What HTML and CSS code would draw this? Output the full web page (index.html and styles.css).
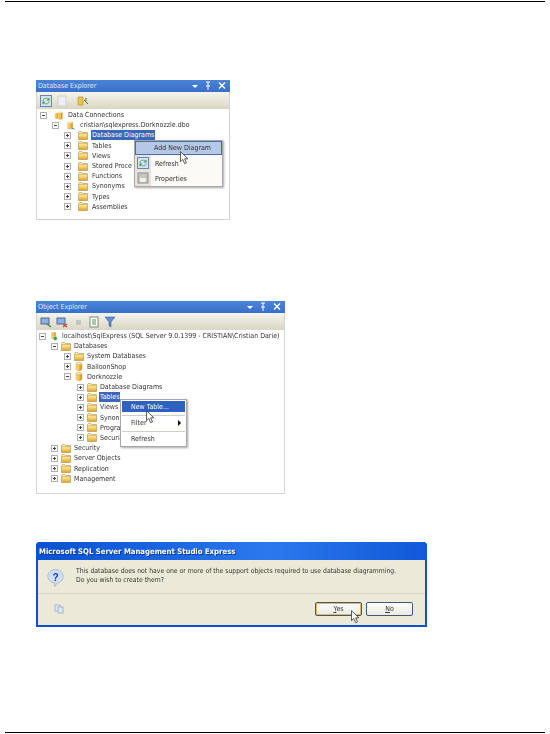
FILE: index.html
```html
<!DOCTYPE html>
<html>

<head>
    <title>SQL Server screenshots</title>
    <link rel="stylesheet" href="styles.css">
</head>

<body>
    <svg class="defs" width="0" height="0">
        <defs>
            <linearGradient id="folderfill" x1="0" y1="0" x2="0" y2="1">
                <stop offset="0" stop-color="#fff3c0"/>
                <stop offset=".5" stop-color="#f8d878"/>
                <stop offset="1" stop-color="#e0a030"/>
            </linearGradient>
            <linearGradient id="dbfill" x1="0" y1="0" x2="1" y2="0">
                <stop offset="0" stop-color="#fbe08a"/>
                <stop offset=".5" stop-color="#f5c040"/>
                <stop offset="1" stop-color="#cf8e20"/>
            </linearGradient>
        </defs>
        <symbol id="folder" viewBox="0 0 10 9">
            <path d="M.5 2V1.200L1.200.5h2.600l.8 1h4.900v7H.5z" fill="url(#folderfill)" stroke="#a8904c" stroke-width=".6"/>
            <path d="M1 2.500h8" stroke="#c09a40" stroke-width=".5"/>
        </symbol>
        <symbol id="plus" viewBox="0 0 7 7">
            <rect x=".5" y=".5" width="6" height="6" fill="#fafafa" stroke="#b0b0b0"/>
            <path d="M2 3.500h3M3.500 2v3" stroke="#444"/>
        </symbol>
        <symbol id="minus" viewBox="0 0 7 7">
            <rect x=".5" y=".5" width="6" height="6" fill="#fafafa" stroke="#b0b0b0"/>
            <path d="M2 3.500h3" stroke="#444"/>
        </symbol>
        <symbol id="db" viewBox="0 0 8 11">
            <path d="M.5 2v7c0 2 7 2 7 0V2z" fill="url(#dbfill)" stroke="#b5862a" stroke-width=".5"/>
            <ellipse cx="4" cy="2" rx="3.500" ry="1.500" fill="#fdeeb0" stroke="#b5862a" stroke-width=".5"/>
        </symbol>
        <symbol id="conn" viewBox="0 0 10 11">
            <path d="M.5 3v6h3V3z" fill="url(#dbfill)" stroke="#b5862a" stroke-width=".4"/>
            <path d="M4 1.500v8.500h5V1.500z" fill="url(#dbfill)" stroke="#b5862a" stroke-width=".4"/>
            <ellipse cx="6.500" cy="1.500" rx="2.500" ry="1" fill="#fdeeb0"/>
        </symbol>
        <symbol id="link" viewBox="0 0 10 11">
            <path d="M1 1.500v8h6v-8z" fill="url(#dbfill)" stroke="#b5862a" stroke-width=".4"/>
            <ellipse cx="4" cy="1.500" rx="3" ry="1.200" fill="#fdeeb0"/>
            <path d="M6 8.500l3 1.500" stroke="#3d7ab0" stroke-width="1.200"/>
        </symbol>
        <symbol id="server" viewBox="0 0 10 11">
            <path d="M2 1l5-.5V8H2z" fill="url(#dbfill)" stroke="#b5862a" stroke-width=".4"/>
            <circle cx="6.500" cy="7.800" r="2.600" fill="#3fa04a" stroke="#fff" stroke-width=".6"/>
        </symbol>
        <symbol id="refresh" viewBox="0 0 12 12">
            <rect x=".5" y=".5" width="11" height="11" fill="#d6e3f4" stroke="#6a86b4"/>
            <path d="M3 6c0-3.500 5-3.500 6-1M9 6.500c0 3-5 3-6 1" stroke="#5aa85a" fill="none"/>
            <path d="M9.500 2.500v3h-3zM2.500 9.500v-3h3z" fill="#3d9a3d"/>
        </symbol>
        <symbol id="cursor" viewBox="0 0 11 15">
            <path d="M.5.500v11l2.600-2.400 2 4.600 2-.9-2-4.400h3.600z" fill="#fff" stroke="#222" stroke-width=".8"/>
        </symbol>
        <symbol id="wincontrols" viewBox="0 0 36 10">
            <path d="M1 4h6L4 7z" fill="#fff"/>
            <path d="M17 1v4M15 1h4M15 5h4M17 5v4" stroke="#fff" fill="none"/>
            <path d="M28 1.500l6 6M34 1.500l-6 6" stroke="#fff" stroke-width="1.400"/>
        </symbol>
    </svg>

    <div class="page">
        <hr class="rule" />

        <div class="panel panel-db">
            <div class="titlebar">
                <span>Database Explorer</span>
                <svg class="controls"><use href="#wincontrols"/></svg>
            </div>
            <div class="toolbar">
                <svg class="tool"><use href="#refresh"/></svg>
                <svg class="tool" viewBox="0 0 12 12"><rect x="2" y="1" width="8" height="10" fill="#efefef" stroke="#cfcfcf"/></svg>
                <i class="tool-sep"></i>
                <svg class="tool" viewBox="0 0 12 12"><path d="M1 2h5v8H1z" fill="#f2c43e" stroke="#a8892f" stroke-width=".6"/><path d="M7 5l4 4M9 3v3" stroke="#3d7a3d"/></svg>
            </div>
            <div class="tree tree-db">
                <div class="row d0"><svg class="exp"><use href="#minus"/></svg><svg class="ico"><use href="#conn"/></svg><span>Data Connections</span></div>
                <div class="row d1"><svg class="exp"><use href="#minus"/></svg><svg class="ico"><use href="#link"/></svg><span>cristian\sqlexpress.Dorknozzle.dbo</span></div>
                <div class="row d2"><svg class="exp"><use href="#plus"/></svg><svg class="ico"><use href="#folder"/></svg><span class="sel">Database Diagrams</span></div>
                <div class="row d2"><svg class="exp"><use href="#plus"/></svg><svg class="ico"><use href="#folder"/></svg><span>Tables</span></div>
                <div class="row d2"><svg class="exp"><use href="#plus"/></svg><svg class="ico"><use href="#folder"/></svg><span>Views</span></div>
                <div class="row d2"><svg class="exp"><use href="#plus"/></svg><svg class="ico"><use href="#folder"/></svg><span>Stored Proce</span></div>
                <div class="row d2"><svg class="exp"><use href="#plus"/></svg><svg class="ico"><use href="#folder"/></svg><span>Functions</span></div>
                <div class="row d2"><svg class="exp"><use href="#plus"/></svg><svg class="ico"><use href="#folder"/></svg><span>Synonyms</span></div>
                <div class="row d2"><svg class="exp"><use href="#plus"/></svg><svg class="ico"><use href="#folder"/></svg><span>Types</span></div>
                <div class="row d2"><svg class="exp"><use href="#plus"/></svg><svg class="ico"><use href="#folder"/></svg><span>Assemblies</span></div>
            </div>

            <div class="menu menu-db">
                <div class="menu-item hot-light"><span>Add New Diagram</span></div>
                <div class="menu-item tall">
                    <svg class="menu-ico"><use href="#refresh"/></svg>
                    <span>Refresh</span>
                </div>
                <div class="menu-item tall">
                    <svg class="menu-ico" viewBox="0 0 12 12"><rect x="1" y="1" width="10" height="10" fill="#c4c4c4" stroke="#909090"/><rect x="3" y="6" width="6" height="4" fill="#f0f0f0"/></svg>
                    <span>Properties</span>
                </div>
            </div>
            <svg class="cursor cursor-db"><use href="#cursor"/></svg>
        </div>

        <div class="panel panel-obj">
            <div class="titlebar">
                <span>Object Explorer</span>
                <svg class="controls"><use href="#wincontrols"/></svg>
            </div>
            <div class="toolbar">
                <svg class="tool" viewBox="0 0 12 12"><rect x="1" y="2" width="8" height="6" fill="#8fb0dc" stroke="#456a9c"/><path d="M7 8l4 3" stroke="#3d9a3d" stroke-width="1.500"/></svg>
                <svg class="tool" viewBox="0 0 12 12"><rect x="1" y="2" width="8" height="6" fill="#8fb0dc" stroke="#456a9c"/><path d="M7 8l4 3M11 8l-4 3" stroke="#d04030" stroke-width="1.200"/></svg>
                <svg class="tool" viewBox="0 0 12 12"><rect x="4" y="4" width="5" height="5" fill="#c4c4c4"/></svg>
                <svg class="tool" viewBox="0 0 12 12"><rect x="2" y="1" width="8" height="10" fill="#fff" stroke="#7a8a7a"/><path d="M4 4h4M4 6h4M4 8h4" stroke="#5a8a5a"/></svg>
                <svg class="tool" viewBox="0 0 12 12"><path d="M1 1h10L7 6v5L5 10V6z" fill="#5f8fd6" stroke="#3a62a0" stroke-width=".6"/></svg>
            </div>
            <div class="tree tree-obj">
                <div class="row d0"><svg class="exp"><use href="#minus"/></svg><svg class="ico"><use href="#server"/></svg><span>localhost\SqlExpress (SQL Server 9.0.1399 - CRISTIAN\Cristian Darie)</span></div>
                <div class="row d1"><svg class="exp"><use href="#minus"/></svg><svg class="ico"><use href="#folder"/></svg><span>Databases</span></div>
                <div class="row d2"><svg class="exp"><use href="#plus"/></svg><svg class="ico"><use href="#folder"/></svg><span>System Databases</span></div>
                <div class="row d2"><svg class="exp"><use href="#plus"/></svg><svg class="ico"><use href="#db"/></svg><span>BalloonShop</span></div>
                <div class="row d2"><svg class="exp"><use href="#minus"/></svg><svg class="ico"><use href="#db"/></svg><span>Dorknozzle</span></div>
                <div class="row d3"><svg class="exp"><use href="#plus"/></svg><svg class="ico"><use href="#folder"/></svg><span>Database Diagrams</span></div>
                <div class="row d3"><svg class="exp"><use href="#plus"/></svg><svg class="ico"><use href="#folder"/></svg><span class="sel">Tables</span></div>
                <div class="row d3"><svg class="exp"><use href="#plus"/></svg><svg class="ico"><use href="#folder"/></svg><span>Views</span></div>
                <div class="row d3"><svg class="exp"><use href="#plus"/></svg><svg class="ico"><use href="#folder"/></svg><span>Synon</span></div>
                <div class="row d3"><svg class="exp"><use href="#plus"/></svg><svg class="ico"><use href="#folder"/></svg><span>Progra</span></div>
                <div class="row d3"><svg class="exp"><use href="#plus"/></svg><svg class="ico"><use href="#folder"/></svg><span>Securi</span></div>
                <div class="row d1"><svg class="exp"><use href="#plus"/></svg><svg class="ico"><use href="#folder"/></svg><span>Security</span></div>
                <div class="row d1"><svg class="exp"><use href="#plus"/></svg><svg class="ico"><use href="#folder"/></svg><span>Server Objects</span></div>
                <div class="row d1"><svg class="exp"><use href="#plus"/></svg><svg class="ico"><use href="#folder"/></svg><span>Replication</span></div>
                <div class="row d1"><svg class="exp"><use href="#plus"/></svg><svg class="ico"><use href="#folder"/></svg><span>Management</span></div>
            </div>

            <div class="menu menu-obj">
                <div class="menu-item hot-blue"><span>New Table...</span></div>
                <i class="menu-sep"></i>
                <div class="menu-item"><span>Filter</span><b class="arrow"></b></div>
                <i class="menu-sep"></i>
                <div class="menu-item"><span>Refresh</span></div>
            </div>
            <svg class="cursor cursor-obj"><use href="#cursor"/></svg>
        </div>

        <div class="dialog">
            <div class="dialog-title">Microsoft SQL Server Management Studio Express</div>
            <div class="dialog-body">
                <svg class="question" viewBox="0 0 20 22">
                    <path d="M10 1c5 0 9 3.500 9 8s-4 8-7 8l-3 4v-4C4 16 1 13 1 9s4-8 9-8z" fill="#cfe0f6" stroke="#8aa6cc" stroke-width=".7"/>
                    <text x="10" y="14" class="question-mark">?</text>
                </svg>
                <p>This database does not have one or more of the support objects required to use database diagramming.<br />Do you wish to create them?</p>
            </div>
            <div class="dialog-foot">
                <svg class="copy" viewBox="0 0 10 10"><rect x="1" y="1" width="5" height="6" fill="#dfe7f3" stroke="#8ea3c4" stroke-width=".7"/><rect x="4" y="3" width="5" height="6" fill="#dfe7f3" stroke="#8ea3c4" stroke-width=".7"/></svg>
                <button type="button" class="btn btn-focus"><u>Y</u>es</button>
                <button type="button" class="btn"><u>N</u>o</button>
            </div>
            <svg class="cursor cursor-dlg"><use href="#cursor"/></svg>
        </div>

        <hr class="rule rule-bottom" />
    </div>
</body>

</html>
```

FILE: styles.css
```css
body {
  margin: 0;
  background: #fff;
  font-family: "DejaVu Sans Condensed", "DejaVu Sans", sans-serif;
  font-stretch: condensed;
  font-size: 7px;
  color: #333;
}

.defs {
  position: absolute;
}

.page {
  display: flex;
  flex-direction: column;
  height: 734px;
  box-sizing: border-box;
  padding-top: 1px;
}

.rule {
  border: none;
  height: 1px;
  background: #000;
  margin: 0 5px;
}

.rule-bottom {
  margin-top: auto;
  margin-bottom: 1px;
}

/* tool windows */
.panel {
  position: relative;
  margin-left: 36px;
  border: 1px solid #d4d4d4;
  border-top: none;
  box-sizing: border-box;
  filter: blur(.35px);
}

.panel-db {
  width: 194px;
  height: 140px;
  margin-top: 78px;
}

.panel-obj {
  width: 249px;
  height: 193px;
  margin-top: 81px;
}

.titlebar {
  display: flex;
  align-items: center;
  justify-content: space-between;
  height: 12px;
  padding: 0 3px 0 2px;
  margin: 0 -1px;
  background: linear-gradient(#4a84d8, #3a70c8);
  color: #dfe9f8;
  font-size: 7px;
}

.controls {
  width: 36px;
  height: 10px;
}

.toolbar {
  display: flex;
  align-items: center;
  gap: 4px;
  height: 17px;
  padding-left: 3px;
  background: linear-gradient(#f6f5ee, #d9d6c3);
}

.tool {
  width: 12px;
  height: 12px;
}

.tool-sep {
  width: 1px;
}

.tree {
  padding-top: 1px;
}

.row {
  display: flex;
  align-items: center;
  height: 10.2px;
  line-height: 10px;
  white-space: nowrap;
}

.exp {
  flex: none;
  width: 7px;
  height: 7px;
}

.ico {
  flex: none;
  width: 10px;
  height: 9px;
}

.tree-db .exp {
  margin-right: 7px;
}

.tree-db .ico {
  margin-right: 4px;
}

.tree-db .d0 { padding-left: 3px; }
.tree-db .d1 { padding-left: 15px; }
.tree-db .d2 { padding-left: 27px; }

.tree-obj .exp {
  margin-right: 3px;
}

.tree-obj .ico {
  margin-right: 3px;
}

.tree-obj .d0 { padding-left: 2px; }
.tree-obj .d1 { padding-left: 14px; }
.tree-obj .d2 { padding-left: 27px; }
.tree-obj .d3 { padding-left: 40px; }

.sel {
  background: #3a68b8;
  color: #fff;
  padding: 0 1px;
  margin-left: -1px;
}

/* context menus */
.menu {
  position: absolute;
  box-sizing: border-box;
  background: #fff;
  border: 1px solid #a8a8a8;
  box-shadow: 1px 1px 2px rgba(0, 0, 0, .35);
}

.menu-db {
  left: 97px;
  top: 60px;
  width: 89px;
  height: 47px;
  background: linear-gradient(90deg, #e8e5d6 16px, #fbfaf6 16px);
}

.menu-obj {
  left: 83px;
  top: 98px;
  width: 67px;
  height: 48px;
  padding: 1px 0;
}

.menu-item {
  position: relative;
  display: flex;
  align-items: center;
  height: 12px;
  padding-left: 20px;
}

.menu-db .menu-item.tall {
  height: 15px;
}

.menu-db .hot-light {
  box-sizing: border-box;
  height: 14px;
  margin-bottom: 1px;
  background: #b6c8e8;
  border: 1px solid #4a6ea8;
  padding-left: 18px;
}

.menu-obj .menu-item {
  padding-left: 10px;
}

.menu-obj .hot-blue {
  height: 11px;
  background: #2f62c0;
  color: #fff;
  margin: 0 1px;
  padding-left: 9px;
}

.menu-sep {
  display: block;
  height: 1px;
  margin: 2px 1px 1px;
  background: #d4d0c8;
}

.hot-blue + .menu-sep {
  margin-top: 3px;
}

.menu-ico {
  position: absolute;
  left: 2px;
  top: 1px;
  width: 12px;
  height: 12px;
}

.arrow {
  position: absolute;
  right: 5px;
  top: 3px;
  border-left: 3px solid #000;
  border-top: 3px solid transparent;
  border-bottom: 3px solid transparent;
}

.cursor {
  position: absolute;
  width: 10px;
  height: 14px;
}

.cursor-db { left: 143px; top: 71px; }
.cursor-obj { left: 109px; top: 109px; }
.cursor-dlg { left: 313px; top: 68px; }

/* message box */
.dialog {
  position: relative;
  width: 391px;
  height: 85px;
  margin: 48px 0 0 36px;
  box-sizing: border-box;
  border: 2px solid #0f4fd0;
  border-top: none;
  border-radius: 4px 4px 0 0;
  background: #ece9d8;
  filter: blur(.35px);
}

.dialog-title {
  display: flex;
  align-items: center;
  height: 18px;
  margin: 0 -2px;
  padding-left: 3px;
  border-radius: 4px 4px 0 0;
  background: linear-gradient(90deg, #0a50d0, #2a78ee 60%, #1058d8);
  color: #fff;
  font-weight: bold;
  font-size: 7.7px;
  text-shadow: 1px 1px 0 #0a3a90;
}

.dialog-body {
  display: flex;
  height: 34px;
  padding: 7px 0 0 9px;
  box-sizing: border-box;
  border-bottom: 1px solid #d8d5c2;
}

.dialog-body p {
  margin: 0;
  padding: 0 0 0 12px;
  font-size: 6.8px;
  line-height: 9px;
  white-space: nowrap;
}

.question {
  flex: none;
  width: 17px;
  height: 20px;
  margin-top: 1px;
}

.question-mark {
  font-family: "Liberation Sans", sans-serif;
  font-weight: bold;
  font-size: 12px;
  fill: #1c3f94;
  text-anchor: middle;
}

.dialog-foot {
  display: flex;
  align-items: center;
  gap: 4px;
  height: 30px;
  padding: 0 12px 0 16px;
}

.copy {
  width: 10px;
  height: 10px;
  margin-right: auto;
}

.btn {
  width: 47px;
  height: 14px;
  padding: 0;
  border: 1px solid #3c5a78;
  border-radius: 2px;
  background: linear-gradient(#fff, #ece9df);
  font-family: inherit;
  font-stretch: inherit;
  font-size: 7px;
  color: #333;
}

.btn-focus {
  box-shadow: inset 0 0 0 1px #e0b860;
}
```
